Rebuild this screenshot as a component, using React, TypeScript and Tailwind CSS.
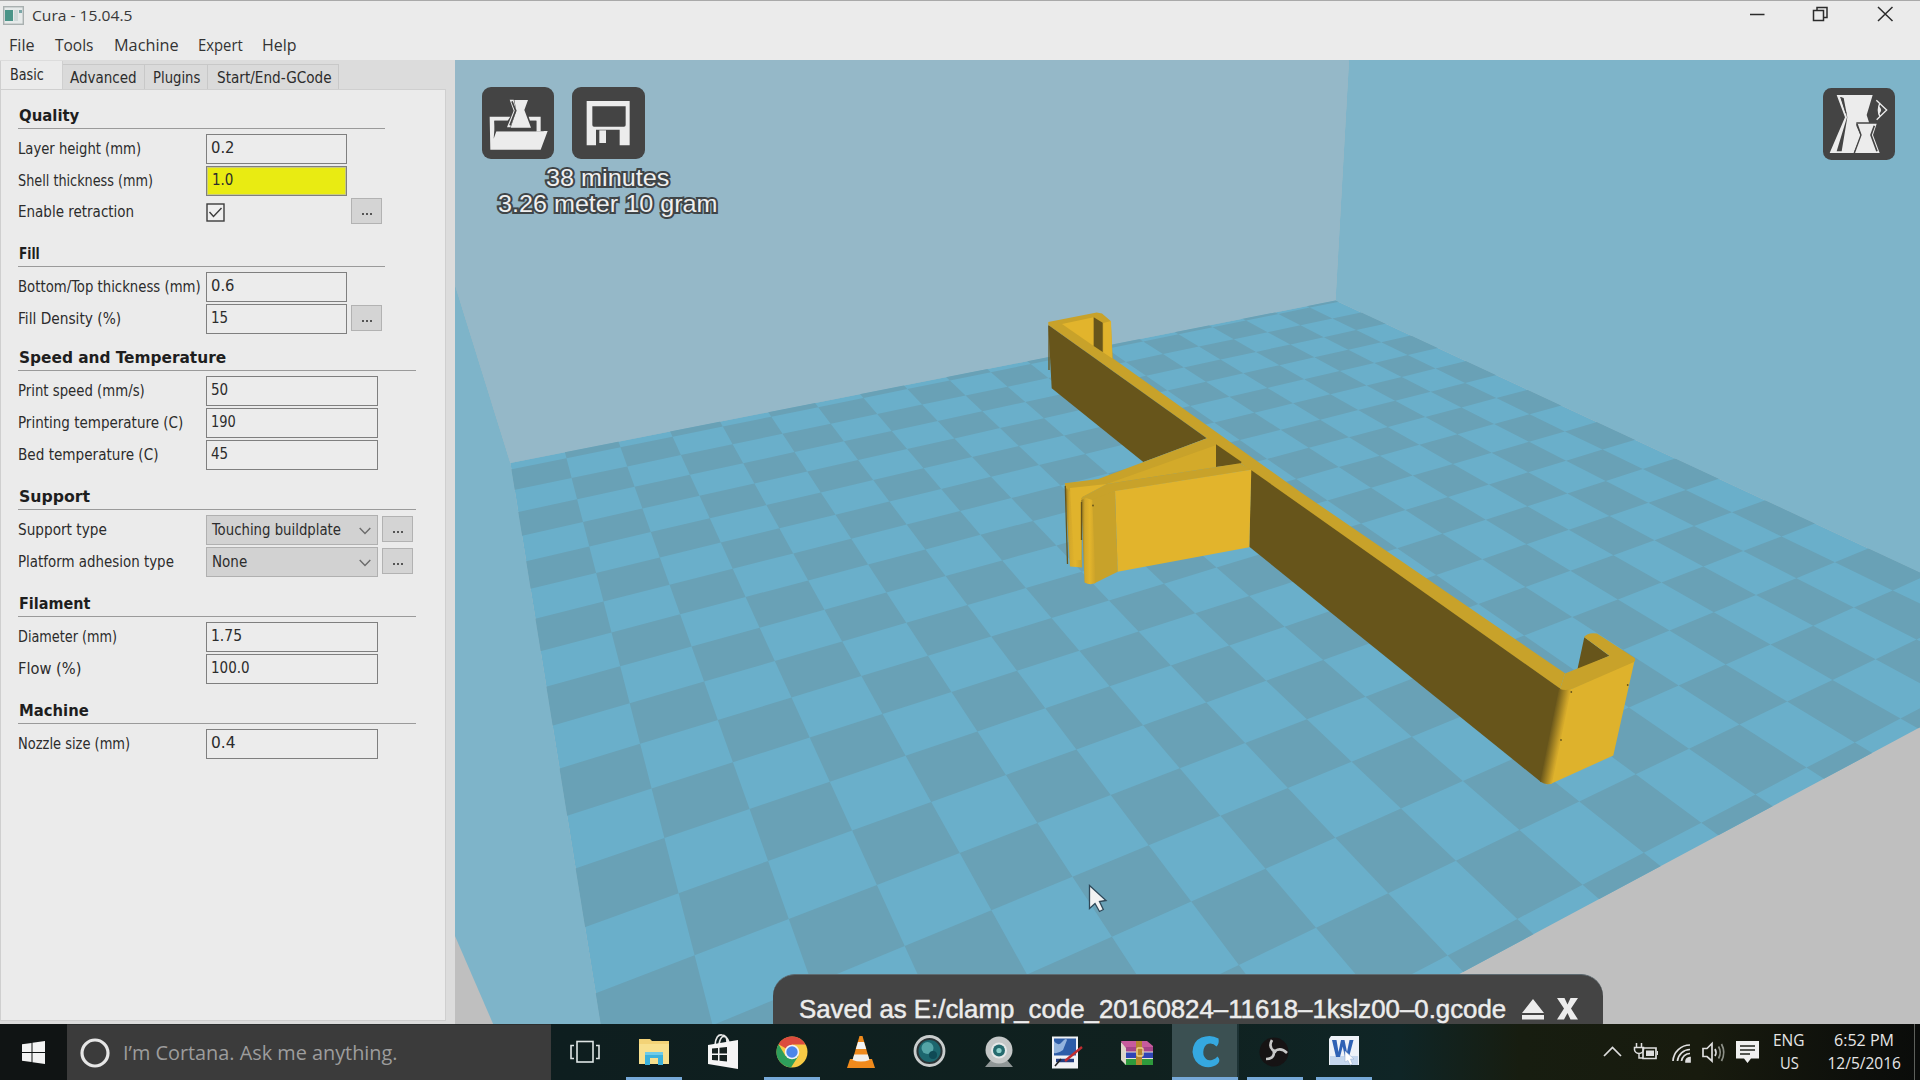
import React, { useLayoutEffect, useRef, useState } from "react";

/* Text squeezed or stretched horizontally to a given width. */
function Fit({ w, className = "", children }: { w: number; className?: string; children: React.ReactNode }) {
  const ref = useRef<HTMLSpanElement>(null);
  const [k, setK] = useState(1);
  useLayoutEffect(() => {
    if (ref.current) setK(w / ref.current.offsetWidth);
  }, [w]);
  return (
    <span className={"inline-block shrink-0 whitespace-nowrap " + className} style={{ width: w }}>
      <span ref={ref} className="inline-block origin-left" style={{ transform: `scaleX(${k})` }}>
        {children}
      </span>
    </span>
  );
}

/* ---------- Build plate geometry ---------- */

type Pt = [number, number];

/* column, row, screen x, screen y */
const PLATE: number[][] = [
  [0, 1, 515.4, 488], [0, 5, 531.9, 588], [0, 9, 554.2, 725.1], [0, 13, 587.2, 926.4],
  [1, 14, 689.9, 957.2], [1, 7, 607.8, 634], [2, 2, 632.3, 487.1], [4, 4, 765.8, 505.9],
  [6, 6, 907.3, 525.1], [4, 14, 958.7, 854.1], [3, 11, 808.2, 738.5], [6, 13, 1077, 750.1],
  [4, 15, 990.8, 911.7], [8, 15, 1290.4, 788.9], [8, 17, 1387.3, 893.4], [9, 18, 1517.7, 917.5],
  [11, 18, 1643.8, 851.9], [13, 18, 1755.3, 792.5], [16, 18, 1901.6, 717.5], [13, 17, 1688.8, 747.9],
  [18, 17, 1915.2, 639.4], [19, 16, 1892.9, 590.3], [19, 14, 1780.5, 537.6], [18, 14, 1744.1, 551],
  [19, 12, 1686.4, 490.3],
];

function fitPlane(points: number[][]): number[] {
  const rows: number[][] = [];
  for (const [u, v, x, y] of points) {
    rows.push([u, v, 1, 0, 0, 0, -u * x, -v * x, x]);
    rows.push([0, 0, 0, u, v, 1, -u * y, -v * y, y]);
  }
  const m = Array.from({ length: 8 }, (_, i) =>
    Array.from({ length: 9 }, (_, j) => rows.reduce((s, r) => s + r[i] * r[j], 0))
  );
  for (let i = 0; i < 8; i++) {
    let p = i;
    for (let r = i + 1; r < 8; r++) if (Math.abs(m[r][i]) > Math.abs(m[p][i])) p = r;
    [m[i], m[p]] = [m[p], m[i]];
    for (let r = 0; r < 8; r++) {
      if (r === i) continue;
      const f = m[r][i] / m[i][i];
      for (let c = i; c < 9; c++) m[r][c] -= f * m[i][c];
    }
  }
  return m.map((r, i) => r[8] / r[i]);
}

const H = fitPlane(PLATE);
const project = (u: number, v: number): Pt => {
  const d = H[6] * u + H[7] * v + 1;
  return [(H[0] * u + H[1] * v + H[2]) / d, (H[3] * u + H[4] * v + H[5]) / d];
};

const tiles: string[] = [];
for (let c = 0; c < 21; c++)
  for (let r = -1; r < 20; r++)
    if ((c + r) % 2 === 0)
      tiles.push(
        "M" +
          [project(c, r), project(c + 1, r), project(c + 1, r + 1), project(c, r + 1)]
            .map(([x, y]) => x.toFixed(1) + " " + y.toFixed(1))
            .join("L") +
          "Z"
      );

const FLOOR = "510.4,463 1335.5,300.5 1920,572.4 1920,727.3 1463,972 1364,1026 601,1026";

function Scene() {
  return (
    <svg className="block h-[964px] w-[1465px]" viewBox="455 60 1465 964">
      <defs>
        <clipPath id="floor"><polygon points={FLOOR} /></clipPath>
        <linearGradient id="round" gradientUnits="userSpaceOnUse" x1="1549" y1="735" x2="1564" y2="738">
          <stop offset="0" stopColor="#67551b" />
          <stop offset="0.75" stopColor="#d2a72a" />
          <stop offset="1" stopColor="#deb22c" />
        </linearGradient>
        <linearGradient id="post" x1="0" x2="1" y1="0" y2="0">
          <stop offset="0" stopColor="#8c7220" />
          <stop offset="0.25" stopColor="#d2a72a" />
          <stop offset="0.6" stopColor="#e2b42c" />
          <stop offset="1" stopColor="#cba229" />
        </linearGradient>
      </defs>
      <rect x="455" y="60" width="1465" height="964" fill="#bfbfbf" />
      <polygon points="455,60 1349,60 1335.5,300.5 510.4,463 455,285" fill="#95b8c8" />
      <polygon points="1349,60 1920,60 1920,572.4 1335.5,300.5" fill="#7eb4c9" />
      <polygon points="455,285 510.4,463 601,1026 494,1026 455,936" fill="#7eb4c9" />
      <polygon points={FLOOR} fill="#6aafca" />
      <g clipPath="url(#floor)"><path d={tiles.join("")} fill="#69a1b6" /></g>

      <g>
        {/* rear hook and rail */}
        <polygon points="1048.3,322 1096.7,312.5 1102,313.5 1110.7,321 1112.7,358.3 1300,491.7 1565,673.3 1560,689 1251,471 1206.7,438.3 1048.3,325" fill="#c8a22a" />
        <polygon points="1062,324 1093.7,317.3 1093.7,346" fill="#e2b42c" />
        <polygon points="1093.7,317.3 1102.7,322.7 1102.7,352 1093.7,346" fill="#67551b" />
        <polygon points="1103.3,323 1111,321 1112.3,358.5 1103.3,352.5" fill="#e0b32c" />
        <polygon points="1048.3,325 1206.7,438.3 1143.3,462 1051.7,388.3" fill="#67551b" />
        <polygon points="1251,470 1560,688.5 1562,740 1541,782 1249.3,546.7" fill="#67551b" />
        {/* clip arms */}
        <polygon points="1065,485 1081,485 1082,567.5 1070,566.5" fill="url(#post)" />
        <polygon points="1064.7,483.3 1098.3,479 1208.3,437.7 1216.7,444 1216.7,466.7 1106.7,484 1082,498 1076,497 1066,488" fill="#c8a22a" />
        <polygon points="1070,488 1107,484 1082,497 1081,560 1074,560" fill="#e0b32c" />
        <polygon points="1216.3,445 1216.3,467 1106.7,484" fill="#d3aa2a" />
        <polygon points="1216,444.3 1241.7,462 1240,464 1216,467" fill="#67551b" />
        <polygon points="1081,498.3 1106.7,484 1240,463.3 1251,470 1115,491.3 1093,501 1082,501" fill="#c8a22a" />
        <polygon points="1115,491 1251.3,469.7 1249.3,547.3 1117.7,571.7" fill="#e2b42c" />
        <polygon points="1091,500 1115,491 1117.7,571.7 1094,583.5" fill="#c8a22a" />
        <path d="M1081.3 500L1086 498L1092.3 500L1095.5 583Q1090 585.500 1084.5 582.500Z" fill="url(#post)" />
        <path d="M1065.300 486L1067.500 564M1081.500 502V540M1049 326V370" stroke="#67551b" strokeWidth="1.3" />
        <circle cx="1093" cy="505.500" r="0.9" fill="#67551b" />
        {/* front hook */}
        <polygon points="1563,689 1571,689 1634.7,660 1613.3,755.5 1551,783.8 1546,784.300" fill="#deb22c" />
        <path d="M1559 688L1571 689L1552 783.500Q1546 785.500 1540 781.500Z" fill="url(#round)" />
        <polygon points="1584.3,637.3 1609.3,655.7 1577.3,670" fill="#67551b" />
        <path d="M1565 673.500L1609.500 655.700L1584 637Q1588 632 1597 633.500L1634 657.500Q1636.500 659.500 1634 662L1573 688.500Q1566 691 1560 689Z" fill="#c8a22a" />
        <g fill="#67551b"><circle cx="1571.300" cy="692" r="0.9" /><circle cx="1561" cy="740" r="0.9" /><circle cx="1627.700" cy="685" r="0.9" /></g>
      </g>

      <path d="M1089.500 885.500V908.500L1095 903.500L1099.500 911.500L1103.300 909.500L1099.500 901.500L1106 900.500Z" fill="#f2f2f2" stroke="#2f4858" strokeWidth="1.3" />
    </svg>
  );
}

/* ---------- Settings panel ---------- */

type RowData = { label: string; lw: number; value?: string; vw?: number; kind?: "input" | "yellow" | "check" | "select"; more?: boolean };
type SectionData = { title: string; tw: number; h: string; wide: boolean; rows: RowData[] };

const SECTIONS: SectionData[] = [
  { title: "Quality", tw: 60, h: "h-[138px]", wide: false, rows: [
    { label: "Layer height (mm)", lw: 123, value: "0.2", vw: 23 },
    { label: "Shell thickness (mm)", lw: 135, value: "1.0", vw: 21, kind: "yellow" },
    { label: "Enable retraction", lw: 116, kind: "check", more: true },
  ] },
  { title: "Fill", tw: 21, h: "h-[104px]", wide: false, rows: [
    { label: "Bottom/Top thickness (mm)", lw: 183, value: "0.6", vw: 23 },
    { label: "Fill Density (%)", lw: 103, value: "15", vw: 17, more: true },
  ] },
  { title: "Speed and Temperature", tw: 207, h: "h-[139px]", wide: true, rows: [
    { label: "Print speed (mm/s)", lw: 127, value: "50", vw: 17 },
    { label: "Printing temperature (C)", lw: 165, value: "190", vw: 25 },
    { label: "Bed temperature (C)", lw: 140, value: "45", vw: 17 },
  ] },
  { title: "Support", tw: 71, h: "h-[107px]", wide: true, rows: [
    { label: "Support type", lw: 89, value: "Touching buildplate", vw: 129, kind: "select", more: true },
    { label: "Platform adhesion type", lw: 156, value: "None", vw: 35, kind: "select", more: true },
  ] },
  { title: "Filament", tw: 71, h: "h-[107px]", wide: true, rows: [
    { label: "Diameter (mm)", lw: 99, value: "1.75", vw: 31 },
    { label: "Flow (%)", lw: 63, value: "100.0", vw: 39 },
  ] },
  { title: "Machine", tw: 70, h: "h-[107px]", wide: true, rows: [
    { label: "Nozzle size (mm)", lw: 112, value: "0.4", vw: 24 },
  ] },
];

function Row({ row, wide }: { row: RowData; wide: boolean }) {
  const size = wide ? "w-[172px]" : "w-[141px]";
  const kind = row.kind ?? "input";
  return (
    <div className={"flex h-[32px] items-start " + (kind === "check" ? "-mt-px" : "")}>
      <div className="flex h-[30px] w-[188px] shrink-0 items-center pt-px">
        <Fit w={row.lw}>{row.label}</Fit>
      </div>
      {kind === "check" && (
        <div className="flex h-[30px] w-[141px] items-center">
          <svg className="h-[19px] w-[19px]" viewBox="0 0 19 19">
            <rect x="1" y="1" width="17" height="17" fill="#efefef" stroke="#3c3c3c" strokeWidth="1.4" />
            <path d="M3.500 9L7.500 13.500L15.500 5" fill="none" stroke="#3c3c3c" strokeWidth="1.4" />
          </svg>
        </div>
      )}
      {(kind === "input" || kind === "yellow") && (
        <div className={"flex h-[30px] items-center border border-[#7f7f7f] pb-px " + size + (kind === "yellow" ? " bg-[#e9eb12] pl-[5px] ring-1 ring-inset ring-[#c9ca80]" : " bg-[#ececec] pl-[4px]")}>
          <Fit w={row.vw ?? 20}>{row.value}</Fit>
        </div>
      )}
      {kind === "select" && (
        <div className={"flex h-[30px] items-center justify-between border border-[#b0b0b0] bg-[#d2d2d2] pt-px pr-[6px] pl-[5px] " + size}>
          <Fit w={row.vw ?? 20}>{row.value}</Fit>
          <svg className="h-[8px] w-[12px]" viewBox="0 0 12 8"><path d="M0.700 1L6 6.500L11.300 1" fill="none" stroke="#6b6b6b" strokeWidth="1.4" /></svg>
        </div>
      )}
      {row.more && (
        <div className={"mt-px flex h-[26px] w-[31px] items-center justify-center gap-[2px] border border-[#b2b2b2] bg-[#d4d4d4] pt-[5px] " + (wide ? "ml-[4px]" : "ml-[4px]")}>
          <i className="h-[2px] w-[2px] bg-[#555]" />
          <i className="h-[2px] w-[2px] bg-[#555]" />
          <i className="h-[2px] w-[2px] bg-[#555]" />
        </div>
      )}
    </div>
  );
}

function Panel() {
  return (
    <div className="flex h-[964px] w-[455px] shrink-0 flex-col bg-[#dcdcdc] font-['DejaVu_Sans_Condensed','DejaVu_Sans',sans-serif] text-[15px] text-[#2c2c2c]">
      <div className="flex h-[29px] items-end">
        <div className="-mb-px flex h-[29px] w-[63px] items-center border-x border-[#cfcfcf] bg-[#ebebeb] pl-[9px]"><Fit w={34}>Basic</Fit></div>
        <div className="flex h-[25px] w-[82px] items-center border-t border-r border-[#c8c8c8] bg-[#dadada] pt-[2px] pl-[7px]"><Fit w={67}>Advanced</Fit></div>
        <div className="flex h-[25px] w-[63px] items-center border-t border-r border-[#c8c8c8] bg-[#dadada] pt-[2px] pl-[8px]"><Fit w={47}>Plugins</Fit></div>
        <div className="flex h-[25px] w-[131px] items-center border-t border-r border-[#c8c8c8] bg-[#dadada] pt-[2px] pl-[9px]"><Fit w={115}>Start/End-GCode</Fit></div>
      </div>
      <div className="h-[932px] w-[446px] border border-[#cfcfcf] bg-[#ebebeb] pt-[10px] pl-[17px]">
        {SECTIONS.map((s) => (
          <div key={s.title} className={s.h}>
            <div className={"flex h-[29px] items-center border-b border-[#9a9a9a] pt-[4px] pl-px text-[16px] font-bold text-[#1e1e1e] " + (s.wide ? "w-[398px]" : "w-[367px]")}>
              <Fit w={s.tw}>{s.title}</Fit>
            </div>
            <div className="pt-[5px]">
              {s.rows.map((r) => <Row key={r.label} row={r} wide={s.wide} />)}
            </div>
          </div>
        ))}
      </div>
    </div>
  );
}

/* ---------- Viewport overlays ---------- */

function LoadIcon() {
  return (
    <svg className="h-[72px] w-[72px]" viewBox="65 81 216 216">
      <rect x="65" y="81" width="216" height="216" rx="27" fill="#444" />
      <path d="M88 170H150L142 182H102V210L100 236L108 214H250V213H262L241 269H90Z" fill="#ececec" />
      <path d="M205 170H241V214H228V182H209Z" fill="#ececec" />
      <path d="M102 182H146L138 204H214L209 182H228V214H106Z" fill="#444" />
      <path d="M162 120H203L192 150L212 203H151L168 152Z" fill="#ececec" />
      <path d="M148 119H160L168 152L150 202H140L160 152Z" fill="#ececec" />
      <path d="M155 124L166 152L149 196" fill="none" stroke="#444" strokeWidth="5" />
    </svg>
  );
}

function SaveIcon() {
  return (
    <svg className="h-[72px] w-[73px]" viewBox="336 84 219 216">
      <rect x="336" y="84" width="219" height="216" rx="27" fill="#444" />
      <path d="M380 126H509V259H479V212H408V259H380ZM397 142V198Q397 203 402 203H492Q497 203 497 198V142Z" fill="#ececec" fillRule="evenodd" />
      <rect x="418" y="214" width="20" height="38" fill="#ececec" />
    </svg>
  );
}

function ViewIcon() {
  return (
    <svg className="h-[72px] w-[72px]" viewBox="370 264 216 216">
      <rect x="370" y="264" width="216" height="216" rx="25" fill="#444" />
      <path d="M411 285H519L501 345L508 367H470V377L483 407L462 459H390L436 352Z" fill="#ececec" />
      <path d="M423 291L442 352L411 454H426L443 352L432 294Z" fill="#444" />
      <path d="M423 291L439 340" stroke="#444" strokeWidth="3" />
      <path d="M472 371H531L520 405L540 459H464L484 405Z" fill="#ececec" />
      <path d="M472 371L484 405L464 459" fill="none" stroke="#444" strokeWidth="4" />
      <path d="M524 377L514 405L532 454" fill="none" stroke="#444" strokeWidth="5" />
      <path d="M530 301L561 330L531 359M541 308Q531 330 541 350" fill="none" stroke="#ececec" strokeWidth="4" />
      <path d="M537 318Q552 330 537 343Z" fill="#ececec" />
    </svg>
  );
}

const outlined = "text-[#f0f0f0] [-webkit-text-stroke:4px_#3f4548] [paint-order:stroke_fill]";

function Viewport() {
  return (
    <div className="relative h-[964px] flex-1 overflow-hidden font-['Liberation_Sans',sans-serif]">
      <Scene />
      <div className="absolute top-[27px] left-[27px] flex gap-[18px]"><LoadIcon /><SaveIcon /></div>
      <div className={"absolute top-[105px] left-[42px] flex w-[220px] flex-col items-center text-[24px] leading-[26px] " + outlined}>
        <Fit w={123}>38 minutes</Fit>
        <Fit w={219}>3.26 meter 10 gram</Fit>
      </div>
      <div className="absolute top-[28px] right-[25px]"><ViewIcon /></div>
      <div className="absolute top-[914px] left-[318px] flex h-[70px] w-[830px] items-start rounded-[22px] border-t border-[#5d6a70] bg-[#444] pt-[17px] pl-[26px] text-[26px] leading-[34px] text-[#ececec] [-webkit-text-stroke:0.5px_#ececec]">
        <Fit w={707}>Saved as E:/clamp_code_20160824–11618–1kslz00–0.gcode</Fit>
        <svg className="mt-[7px] ml-[16px] h-[21px] w-[22px]" viewBox="0 0 22 21"><path d="M11 0L22 14H0ZM0 16H22V20.500H0Z" fill="#ececec" /></svg>
        <svg className="mt-[6px] ml-[13px] h-[22px] w-[21px]" viewBox="0 0 21 22"><path d="M0 0H7.500L10.500 6.500L13.500 0H21L14 10.500L21 21.500H13.500L10.500 15L7 21.500H0L7 10.500Z" fill="#ececec" /></svg>
      </div>
    </div>
  );
}

/* ---------- Taskbar ---------- */

const ICONS: { id: string; run?: string; art: React.ReactNode }[] = [
  { id: "taskview", art: <g fill="none" stroke="#dfe5e5" strokeWidth="1.6"><rect x="12" y="9.500" width="16" height="20.500" /><path d="M9 13.500H6V26.500H9M31 13.500H34V26.500H31" /></g> },
  { id: "explorer", run: "w-[56px]", art: <g><path d="M5 7H16L18 9H35V32H5Z" fill="#f3d377" /><path d="M5 12H35V32H5Z" fill="#f8e08e" /><path d="M11 20H29V33H24V26H16V33H11Z" fill="#3cb1dc" /><path d="M11 20H29V23H11Z" fill="#6fcbe8" /></g> },
  { id: "store", art: <g><path d="M12 13Q13 2 19 3Q24 3 24 10M16 12Q18 2 23 5Q26 8 26 12" fill="none" stroke="#e8e8e8" strokeWidth="1.6" /><path d="M5 13L35 8V37L5 32Z" fill="#f5f5f5" /><path d="M9 16.500L15 16V21.500H9ZM16.500 15.800L24 15V21.500H16.500ZM9 23H15V28.500L9 28ZM16.500 23H24V29.500L16.500 28.700Z" fill="#16211f" /></g> },
  { id: "chrome", run: "w-[56px]", art: <g><circle cx="20" cy="20" r="15.500" fill="#f7ca45" /><path d="M20 20L6.500 12.200A15.500 15.500 0 0 1 33.500 12.500H20Z" fill="#dc4b3e" /><path d="M6.500 12.200A15.500 15.500 0 0 0 19 35.500L26.500 23.700L13.500 24Z" fill="#2e9e5b" /><circle cx="20" cy="20" r="7.300" fill="#f3f3f3" /><circle cx="20" cy="20" r="5.700" fill="#4c86ea" /></g> },
  { id: "vlc", art: <g><path d="M9 27H31L34 36H6Z" fill="#f08a1c" /><path d="M18.500 4H21.500L29 30Q20 34 11 30Z" fill="#f08a1c" /><path d="M17 10H23L25.200 17H14.800Z" fill="#f4f4f4" /><path d="M13.200 22.500H26.800L28.500 28Q20 31 11.500 28Z" fill="#f1efec" /></g> },
  { id: "lens", art: <g><circle cx="19.500" cy="19" r="14.500" fill="#2b3436" stroke="#c9cdcd" strokeWidth="2.800" /><circle cx="19.500" cy="19" r="11" fill="#1c666e" /><circle cx="17.500" cy="16" r="6" fill="#54a4a6" /><circle cx="23" cy="23" r="4" fill="#0f4a55" /></g> },
  { id: "webcam", art: <g><path d="M12 28L6 35H34L28 28Z" fill="#8f9696" /><circle cx="20" cy="18" r="13.500" fill="#c4c7c7" /><circle cx="20" cy="18.500" r="8" fill="#e6e8e8" /><circle cx="20" cy="18.500" r="6" fill="#256a6e" /><circle cx="20" cy="18.500" r="2.600" fill="#8ccfca" /></g> },
  { id: "journal", art: <g transform="translate(-3 0)"><rect x="7" y="4.500" width="26" height="32" fill="#f1f3f6" /><rect x="9" y="6.500" width="22" height="18" fill="#2d5da8" /><path d="M9 16V9Q13 15 17 10T22 8L18 18Q13 22 9 21Z" fill="#93b4de" /><path d="M9 24.500H31" stroke="#f1f3f6" strokeWidth="2" /><path d="M11 28.500H29" stroke="#243e80" strokeWidth="3.500" /><path d="M10 34L16 27" stroke="#222" strokeWidth="1.600" /><path d="M37 15L20 29" stroke="#c02c30" strokeWidth="2.400" /></g> },
  { id: "archive", art: <g><path d="M4 9L30 9L36 14V18H8Z" fill="#c75b9d" /><path d="M5 15H36V21H8Z" fill="#a54489" /><path d="M5 20H36V27H8Z" fill="#2f45b5" /><path d="M5 26H36V33H8Z" fill="#2e9a3c" /><path d="M4 10L9 16V33L4 28Z" fill="#ddd6c9" /><path d="M8 20H36M8 26.500H36" stroke="#e8e4da" /><path d="M19 9H25V33H19Z" fill="#b5862e" /><rect x="20" y="16" width="6" height="8" rx="1" fill="none" stroke="#f0d48a" strokeWidth="1.400" /></g> },
  { id: "cura", run: "w-[66px]", art: <path d="M33.500 6.500Q34.500 12 31.500 14.500Q27 9.500 21.500 12.500Q17.500 16 18.500 23Q21 29.500 27 28Q31 26.500 32.500 24.500Q36 28 33 31.500Q26 37.500 17 34Q8.500 30 7.500 20Q8 9 16.500 5.500Q26 2 33.500 6.500Z" fill="#35a8e0" /> },
  { id: "obs", run: "w-[56px]", art: <g><circle cx="19" cy="20" r="14.500" fill="#161314" /><path d="M19 19Q13 15 17 8M20 19Q26 15 32 21M19 20Q19 27 11 27" fill="none" stroke="#c8c8c8" strokeWidth="2.600" /><circle cx="19.500" cy="19.500" r="2" fill="#c8c8c8" /></g> },
  { id: "word", run: "w-[56px]", art: <g><path d="M7 4H35V33H5V7Z" fill="#eef2f8" /><rect x="6" y="24" width="28" height="9" fill="#c5d7ee" /><path d="M8 8H12.500L14.500 20L17 8H20.500L23 20L25.500 8H29.500L25 25H21L18.700 14.500L16 25H12Z" fill="#2f62b5" /><path d="M21 30V19L30 27H26.500L28.500 32L26 33L24 28.500Z" fill="#fff" stroke="#9db3d3" strokeWidth="0.600" /></g> },
];

function Taskbar() {
  return (
    <div className="flex h-[56px] w-[1920px] bg-[linear-gradient(90deg,#101414_0px,#101414_66px,#0e1e1f_560px,#10211f_1150px,#0f2526_1400px,#171d10_1520px,#181b0e_1700px,#0d0f0b_1860px,#0a0c0a_1920px)] font-['Open_Sans','Noto_Sans',sans-serif]">
      <div className="flex w-[67px] items-center justify-center">
        <svg className="h-[23px] w-[23px]" viewBox="0 0 23 23"><path d="M0 3.200L9.500 2V11H0ZM10.500 1.800L23 0V11H10.500ZM0 12H9.500V21L0 19.800ZM10.500 12H23V23L10.500 21.200Z" fill="#f3f3f3" /></svg>
      </div>
      <div className="flex w-[484px] items-center border-t border-[#2d2f2f] bg-[#3b3b3b] pl-[12px]">
        <svg className="h-[32px] w-[32px]" viewBox="0 0 32 32"><circle cx="16" cy="16" r="13" fill="none" stroke="#e6e6e6" strokeWidth="3.200" /></svg>
        <Fit w={275} className="ml-[12px] text-[20.5px] text-[#9d9d9d]">I’m Cortana. Ask me anything.</Fit>
      </div>
      <div className="flex">
        {ICONS.map((it) => (
          <div key={it.id} className={"flex flex-col items-center justify-between pt-[7px] " + (it.id === "cura" ? "mr-px ml-[1px] w-[67px] border-r-2 border-[#1d3234] bg-[#3b5052]" : "w-[68.95px]")}>
            <svg className="h-[42px] w-[42px]" viewBox="-1 -1 42 42">{it.art}</svg>
            {it.run && <div className={"h-[3px] bg-[#76a9d8] " + it.run} />}
          </div>
        ))}
      </div>
      <div className="ml-auto flex items-center text-[15.5px] text-[#e6e6e6]">
        <svg className="h-[40px] w-[164px]" viewBox="1600 1032 164 40" fill="none" stroke="#dedede" strokeWidth="1.700">
          <path d="M1604 1056L1612.500 1047.500L1621 1056" />
          <path d="M1643 1048H1656V1058.500H1643Z" />
          <path d="M1646 1050.500H1654V1056H1646ZM1657 1051H1658V1055H1657Z" fill="#dedede" stroke="none" />
          <path d="M1636.500 1043V1047M1641.500 1043V1047M1634.500 1047.500H1643.500V1050Q1643 1053 1639 1053.500Q1635 1053 1634.500 1050ZM1639 1053V1058H1643" strokeWidth="1.500" />
          <path d="M1673 1061A17 17 0 0 1 1690 1045M1677.500 1061A12.500 12.500 0 0 1 1690 1049.500M1681.500 1061A8.500 8.500 0 0 1 1690 1053.500" />
          <path d="M1686 1062A4 4 0 0 1 1690 1057.500V1062Z" fill="#dedede" />
          <path d="M1703 1048.500H1707L1712 1043.500V1061L1707 1056.500H1703Z" />
          <path d="M1715 1049Q1717 1052.500 1715 1056" /><path d="M1718.500 1046.500Q1722 1052.500 1718.500 1058.500M1721.500 1044Q1726 1052.500 1721.500 1061" stroke="#8d9088" />
          <path d="M1736 1041H1759V1058.500H1751L1747.500 1063L1744 1058.500H1736Z" fill="#f0f0f0" stroke="none" />
          <path d="M1740 1046H1755M1740 1050H1755M1740 1054H1750" stroke="#20231c" />
        </svg>
        <div className="ml-[8px] flex w-[34px] flex-col items-center leading-[23px]"><Fit w={32}>ENG</Fit><Fit w={19}>US</Fit></div>
        <div className="ml-[19px] flex w-[78px] flex-col items-center leading-[23px]"><Fit w={60}>6:52 PM</Fit><Fit w={73}>12/5/2016</Fit></div>
        <div className="ml-[11px] h-[56px] w-[6px] border-l border-[#5d605b]" />
      </div>
    </div>
  );
}

export default function App() {
  return (
    <div className="flex h-[1080px] w-[1920px] flex-col overflow-hidden bg-[#ebebeb]">
      <div className="flex h-[31px] items-center border-t border-[#a9a9a9] pl-[3px] font-['Open_Sans','Noto_Sans',sans-serif] text-[15px] text-[#383838]">
        <svg className="-mt-px h-[19px] w-[21px]" viewBox="0 0 21 19"><rect x="0.700" y="0.700" width="19.600" height="17.600" fill="#e6eaea" stroke="#a9b0b0" strokeWidth="1.400" /><rect x="2" y="4" width="8" height="11" fill="#4a9488" /><rect x="11" y="4" width="4" height="11" fill="#cfd8d8" /><rect x="16" y="4" width="3" height="3" fill="#7ba7a8" /></svg>
        <Fit w={101} className="-mt-px ml-[8px]">Cura - 15.04.5</Fit>
        <svg className="-mt-[4px] ml-auto h-[20px] w-[174px]" viewBox="1746 4 174 20" fill="none" stroke="#2b2b2b" strokeWidth="1.500">
          <path d="M1750 14.500H1764.500M1878 7L1892.500 21M1892.500 7L1878 21" />
          <path d="M1813.500 10.500H1823.500V20.500H1813.500ZM1817 10V7.500H1827V17.500H1824" />
        </svg>
      </div>
      <div className="flex h-[29px] items-center pl-[9px] font-['Open_Sans','Noto_Sans',sans-serif] text-[15.5px] text-[#333]">
        <Fit w={26}>File</Fit>
        <Fit w={39} className="ml-[20px]">Tools</Fit>
        <Fit w={65} className="ml-[20px]">Machine</Fit>
        <Fit w={45} className="ml-[19px]">Expert</Fit>
        <Fit w={35} className="ml-[19px]">Help</Fit>
      </div>
      <div className="flex h-[964px]"><Panel /><Viewport /></div>
      <Taskbar />
    </div>
  );
}
